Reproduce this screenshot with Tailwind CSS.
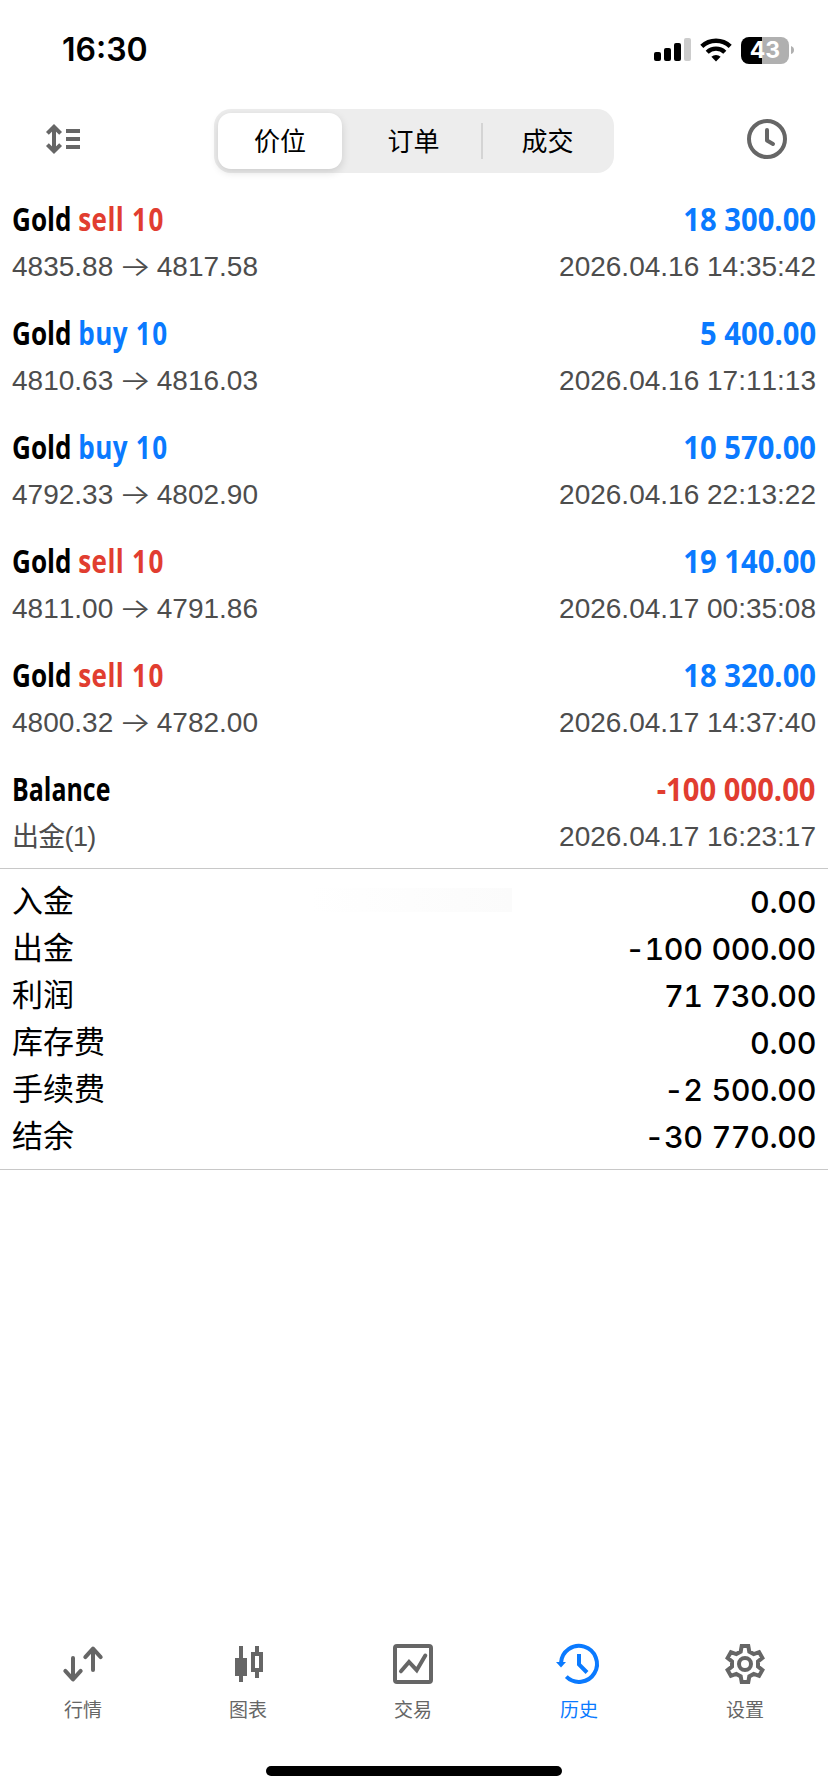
<!DOCTYPE html>
<html lang="zh-CN">
 <head>
    <meta charset="UTF-8" />
    <meta name="viewport" content="width=device-width, initial-scale=1.0" />
    <title>历史</title>
    <script src="https://cdn.jsdelivr.net/npm/@tailwindcss/browser@4"></script>
 </head>
 <body class="bg-white text-black">
    <div class="flex flex-col w-[828px] h-[1792px] overflow-hidden font-['Inter','Noto_Sans_CJK_SC',sans-serif] [font-kerning:none]">

        <!-- Status Bar -->
        <div class="flex items-center justify-between h-[100px] pl-[62px] pr-[33px]">
            <span class="text-[32px] font-semibold">16:30</span>
            <div class="flex items-center">
                <svg class="w-[38px] h-6" viewBox="0 0 38 24">
                    <rect x="0" y="14" width="7" height="9" rx="2"/>
                    <rect x="10" y="10" width="7" height="13" rx="2"/>
                    <rect x="20" y="5" width="7" height="18" rx="2"/>
                    <rect x="30" y="0" width="7" height="23" rx="2" fill="#cccccc"/>
                </svg>
                <svg class="w-8 h-6 ml-[8px]" viewBox="0 0 32 24" fill="none" stroke="#000" stroke-width="4.4">
                    <path d="M1.8 8.4A20.5 20.5 0 0 1 30.2 8.4"/>
                    <path d="M7.2 14.2A12.6 12.6 0 0 1 24.8 14.2"/>
                    <path d="M16 23.5l-4.6-4.7a6.6 6.6 0 0 1 9.2 0z" fill="#000" stroke="none"/>
                </svg>
                <div class="flex items-center ml-[9px]">
                    <div class="flex items-center justify-center w-12 h-[27px] rounded-lg bg-[linear-gradient(90deg,#000_21px,#b0b0b0_21px)] text-white text-[23px] font-bold leading-none">43</div>
                    <svg class="w-[4px] h-[8px] ml-[2px]" viewBox="0 0 4 8" fill="#b0b0b0"><path d="M0 0q3 1 3 4t-3 4z"/></svg>
                </div>
            </div>
        </div>

        <!-- Header -->
        <div class="flex items-start justify-between h-[84px] pl-[45px] pr-[41px] pt-[9px] text-[#666666]">
            <svg class="w-9 h-8 mt-[14px]" viewBox="0 0 36 32" fill="none" stroke="currentColor" stroke-width="4">
                <path d="M9 3v26M2.4 10.4L9 3.8l6.6 6.6M2.4 21.6L9 28.2l6.6-6.6"/>
                <path d="M21 8h14M21 16h14M21 24h14"/>
            </svg>
            <div class="flex w-[400px] h-16 p-1 ml-[133px] rounded-[17px] bg-[#ededed] text-black text-[26px]">
                <div class="flex items-center justify-center w-[124px] rounded-[13px] bg-white shadow-[0_3px_8px_rgba(0,0,0,0.14)]">价位</div>
                <div class="flex items-center justify-center w-[143px]">订单</div>
                <div class="flex items-center justify-center w-[125px] relative">
                    <span class="absolute -left-[4px] top-[10px] w-[2px] h-9 bg-[#d4d4d4]"></span>
                    成交
                </div>
            </div>
            <svg class="w-10 h-10 mt-[10px] ml-auto" viewBox="0 0 40 40" fill="none" stroke="currentColor" stroke-width="4">
                <circle cx="20" cy="20" r="18"/>
                <path d="M20 11v10.5l6 3.5" stroke-linecap="round" stroke-linejoin="round"/>
            </svg>
        </div>

        <!-- Deals -->
        <div id="deals" class="border-b border-[#c8c8c8]"></div>

        <!-- Summary -->
        <div class="relative h-[301px] border-b border-[#c8c8c8] pt-[9px]">
            <div class="absolute left-[310px] top-[19px] w-[202px] h-[24px] bg-linear-to-r from-white to-[#fbfbfb]"></div>
            <div id="summary" class="relative"></div>
        </div>

        <!-- Tab Bar -->
        <div class="grid grid-cols-[166px_164px_166px_166px_166px] mt-auto mb-[41px] text-[#666666] text-[19px] text-center leading-[28px]">
            <div>
                <svg class="w-12 h-12 mx-auto mb-[9px]" viewBox="0 0 48 48" fill="none" stroke="currentColor" stroke-width="4" stroke-linecap="round" stroke-linejoin="round">
                    <path d="M14 18v21M6.3 30.9L14 39.4l7.7-8.5"/>
                    <path d="M34 30V9M26.3 17.1L34 8.6l7.7 8.5"/>
                </svg>
                行情
            </div>
            <div>
                <svg class="w-12 h-12 mx-auto mb-[9px]" viewBox="0 0 48 48" fill="currentColor">
                    <path d="M15 6h4v12h4v18h-4v6h-4v-6h-4V18h4z"/>
                    <path fill-rule="evenodd" d="M31 6h4v6h4v20h-4v6h-4v-6h-4V12h4zM31 16v12h4V16z"/>
                </svg>
                图表
            </div>
            <div>
                <svg class="w-12 h-12 mx-auto mb-[9px]" viewBox="0 0 48 48" fill="none" stroke="currentColor" stroke-width="4">
                    <rect x="6" y="6" width="36" height="36" rx="2"/>
                    <path d="M12 31.3l8-9.3 7.7 8.2 8.6-14.7" stroke-linecap="round"/>
                </svg>
                交易
            </div>
            <div class="text-[#0a7aff]">
                <svg class="w-12 h-12 mx-auto mb-[9px]" viewBox="0 0 48 48" fill="none" stroke="currentColor" stroke-width="4">
                    <path d="M6 23A18 18 0 1 1 11.3 36.7"/>
                    <path d="M24 14v10.5l8 8"/>
                    <path d="M1 22h10l-5 5.4z" fill="currentColor" stroke="none"/>
                </svg>
                历史
            </div>
            <div>
                <svg class="w-12 h-12 mx-auto mb-[9px]" viewBox="0 0 48 48" fill="none" stroke="currentColor" stroke-width="4">
                    <path d="M20.7 6h6.6l1 5.6 4.4 2.5 5.4-2 3.3 5.8-4.4 3.6v5l4.4 3.6-3.3 5.8-5.4-2-4.4 2.5-1 5.6h-6.6l-1-5.6-4.4-2.5-5.4 2-3.3-5.8 4.4-3.6v-5l-4.4-3.6 3.3-5.8 5.4 2 4.4-2.5z"/>
                    <circle cx="24" cy="24" r="6"/>
                </svg>
                设置
            </div>
        </div>

        <!-- Home Indicator -->
        <div class="w-[296px] h-[10px] mx-auto mb-4 shrink-0 rounded-full bg-black"></div>
    </div>

    <script>
        const deals = [
            { type: "sell", from: "4835.88", to: "4817.58", profit: "18 300.00", time: "2026.04.16 14:35:42" },
            { type: "buy", from: "4810.63", to: "4816.03", profit: "5 400.00", time: "2026.04.16 17:11:13" },
            { type: "buy", from: "4792.33", to: "4802.90", profit: "10 570.00", time: "2026.04.16 22:13:22" },
            { type: "sell", from: "4811.00", to: "4791.86", profit: "19 140.00", time: "2026.04.17 00:35:08" },
            { type: "sell", from: "4800.32", to: "4782.00", profit: "18 320.00", time: "2026.04.17 14:37:40" },
            { type: "balance", note: "出金(1)", profit: "-100 000.00", time: "2026.04.17 16:23:17" }
        ];

        const summary = [
            ["入金", "0.00"],
            ["出金", "-100 000.00"],
            ["利润", "71 730.00"],
            ["库存费", "0.00"],
            ["手续费", "-2 500.00"],
            ["结余", "-30 770.00"]
        ];

        const colors = { sell: "text-[#e13d30]", buy: "text-[#0a7aff]" };

        deals.forEach(deal => {
            const isBalance = deal.type === "balance";
            document.getElementById("deals").innerHTML += `
                <div class="h-[114px] px-3 pt-[12px]">
                    <div class="flex justify-between h-[48px] font-['Open_Sans'] text-[33px] leading-[46px] font-bold whitespace-nowrap">
                        ${isBalance
                            ? `<span class="origin-left scale-x-[0.755]">Balance</span>`
                            : `<span class="origin-left scale-x-[0.79]">Gold <span class="tracking-[0.5px] [word-spacing:1px] ${colors[deal.type]}">${deal.type} <span class="tracking-[2px]">10</span></span></span>`}
                        <span class="origin-right scale-x-[0.885] ${isBalance ? colors.sell : colors.buy}">${deal.profit}</span>
                    </div>
                    <div class="flex justify-between font-['Liberation_Sans','Noto_Sans_CJK_SC',sans-serif] text-[28px] leading-[46px] text-[#4d4d4d]">
                        ${isBalance
                            ? `<span class="text-[27px] tracking-[-0.7px]">${deal.note}</span>`
                            : `<span>${deal.from} <span class="inline-block w-7 text-center font-['Inter'] font-light leading-none scale-x-[1.22]">→</span> ${deal.to}</span>`}
                        <span>${deal.time}</span>
                    </div>
                </div>`;
        });

        summary.forEach(([label, value]) => {
            document.getElementById("summary").innerHTML += `
                <div class="flex items-center justify-between h-[47px] px-3 text-[31px]">
                    <span>${label}</span>
                    <span class="text-[30.5px] font-medium tabular-nums tracking-[-0.4px] [word-spacing:1px]">${value}</span>
                </div>`;
        });
    </script>
 </body>
</html>
